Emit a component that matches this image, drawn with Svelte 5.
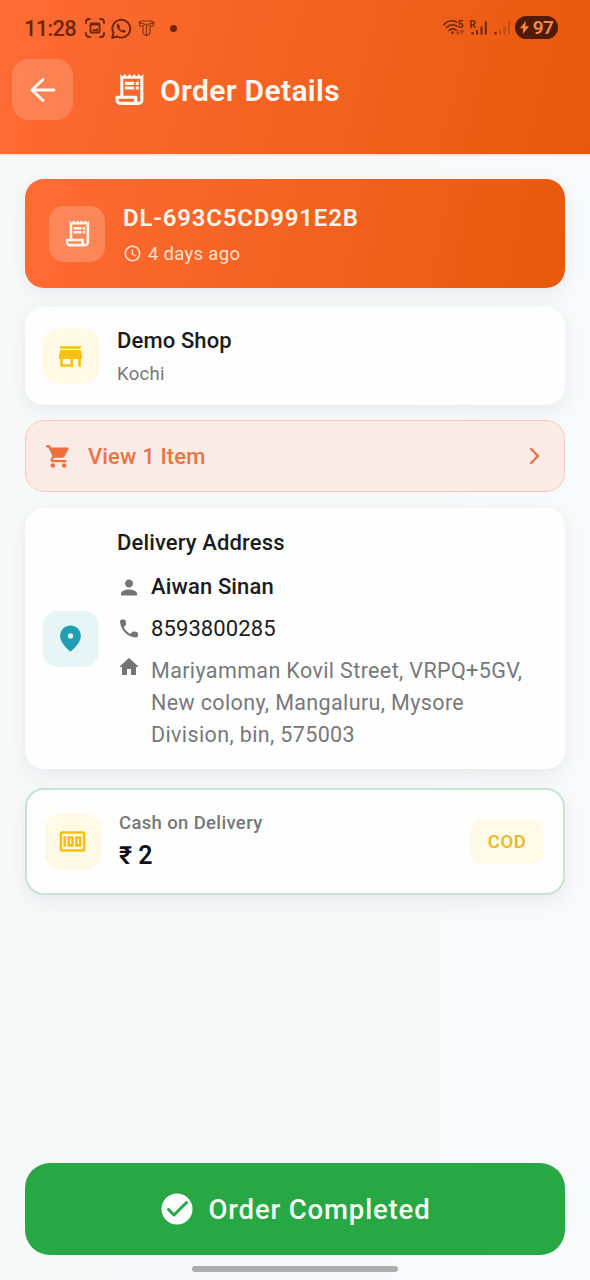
<script>
  const icons = {
    receipt: 'M19.5 3.5 18 2l-1.5 1.5L15 2l-1.5 1.5L12 2l-1.5 1.5L9 2 7.5 3.5 6 2v14H3v3c0 1.66 1.34 3 3 3h12c1.66 0 3-1.34 3-3V2l-1.5 1.5zM15 20H6c-.55 0-1-.45-1-1v-1h10v2zm4-1c0 .55-.45 1-1 1s-1-.45-1-1v-3H8V5h11v14zM9 7h6v2H9zm7 0h2v2h-2zM9 10h6v2H9zm7 0h2v2h-2z',
    store: 'M20 4H4v2h16V4zm1 10v-2l-1-5H4l-1 5v2h1v6h10v-6h4v6h2v-6h1zm-9 4H6v-4h6v4z',
    cart: 'M7 18c-1.1 0-1.99.9-1.99 2S5.9 22 7 22s2-.9 2-2-.9-2-2-2zM1 2v2h2l3.6 7.59-1.35 2.45c-.16.28-.25.61-.25.96 0 1.1.9 2 2 2h12v-2H7.42c-.14 0-.25-.11-.25-.25l.03-.12.9-1.63h7.45c.75 0 1.41-.41 1.75-1.03l3.58-6.49c.08-.14.12-.31.12-.48 0-.55-.45-1-1-1H5.21l-.94-2H1zm16 16c-1.1 0-1.99.9-1.99 2s.89 2 1.99 2 2-.9 2-2-.9-2-2-2z',
    chevron: 'M9.3 6 8.2 7.1 13.1 12l-4.900 4.900 1.100 1.100 6-6z',
    pin: 'M12 2C8 2 4 5 4 10.2c0 3.3 2.6 7.2 7.3 11.5.4.4 1 .4 1.4 0C17.4 17.400 20 13.500 20 10.200 20 5 16 2 12 2zm0 10a2 2 0 1 1 0-4 2 2 0 0 1 0 4z',
    person: 'M12 12c2.210 0 4-1.790 4-4s-1.790-4-4-4-4 1.790-4 4 1.790 4 4 4zm0 2c-2.670 0-8 1.340-8 4v1c0 .55.45 1 1 1h14c.55 0 1-.45 1-1v-1c0-2.660-5.330-4-8-4z',
    phone: 'M19.23 15.26l-2.54-.29c-.61-.07-1.210.14-1.640.57l-1.840 1.840c-2.830-1.440-5.150-3.750-6.590-6.590l1.850-1.850c.43-.43.64-1.030.57-1.640l-.29-2.520c-.12-1.010-.97-1.770-1.990-1.770H5.030c-1.130 0-2.070.94-2 2.070.53 8.540 7.360 15.360 15.890 15.890 1.130.07 2.070-.87 2.070-2v-1.730c.01-1.010-.75-1.860-1.760-1.980z',
    home: 'M10 19v-5h4v5c0 .55.45 1 1 1h3c.55 0 1-.45 1-1v-7h1.700c.46 0 .68-.57.33-.87L12.670 3.600c-.38-.34-.96-.34-1.340 0l-8.360 7.530c-.34.3-.13.87.33.87H5v7c0 .55.45 1 1 1h3c.55 0 1-.45 1-1z',
    money: 'M5 8h2v8H5zM12 8H9c-.55 0-1 .45-1 1v6c0 .55.45 1 1 1h3c.55 0 1-.45 1-1V9c0-.55-.45-1-1-1zm-1 6h-1v-4h1v4zM18 8h-3c-.55 0-1 .45-1 1v6c0 .55.45 1 1 1h3c.55 0 1-.45 1-1V9c0-.55-.45-1-1-1zm-1 6h-1v-4h1v4zM20 4H4c-1.110 0-2 .89-2 2v12c0 1.110.89 2 2 2h16c1.110 0 2-.89 2-2V6c0-1.110-.89-2-2-2zm0 14H4V6h16v12z',
    clock: 'M12 2C6.480 2 2 6.480 2 12s4.480 10 10 10 10-4.480 10-10S17.520 2 12 2zm0 18.100a8.100 8.100 0 1 1 0-16.200 8.100 8.100 0 0 1 0 16.200zM12.700 7H11v6l5.200 3.100.8-1.350-4.300-2.550z'
  };
  const address = ['Mariyamman Kovil Street, VRPQ+5GV,', 'New colony, Mangaluru, Mysore', 'Division, bin, 575003'];
</script>

{#snippet icon(name, size)}
  <svg width={size} height={size} viewBox="0 0 24 24" fill="currentColor" fill-rule="evenodd" aria-hidden="true"><path d={icons[name]} /></svg>
{/snippet}

<div class="screen">
  <header>
    <div class="status">
      <span class="time">11:28</span>
      <svg class="capture" width="20" height="20" viewBox="0 0 20 20" fill="none" stroke="currentColor" stroke-width="1.8" stroke-linecap="round">
        <path d="M1 5V4a3 3 0 0 1 3-3h1M15 1h1a3 3 0 0 1 3 3v1M19 15v1a3 3 0 0 1-3 3h-1M5 19H4a3 3 0 0 1-3-3v-1" />
        <path d="M6.500 5.500h7a1 1 0 0 1 1 1v7a1 1 0 0 1-1 1h-7a1 1 0 0 1-1-1v-7a1 1 0 0 1 1-1zM6 6.500h8" />
        <path d="m7 13 2-2.500 1.500 1.200 1.500-1.700 1.500 3z" fill="currentColor" stroke="none" />
      </svg>
      <svg class="chat" width="21" height="21" viewBox="0 0 21 21" fill="none" stroke="currentColor" stroke-width="1.900">
        <path d="M1.200 19.800 2.500 15A8.900 8.900 0 1 1 6 18.500z" stroke-linejoin="round" />
        <path d="M7.300 5.700c-.5-.3-1.800.5-1.700 1.900.3 3.600 3.600 6.700 6.900 7 1.500 0 2.600-1.100 2.200-1.900l-2.100-1.100-1.400 1c-1.200-.5-2.300-1.500-2.800-2.700l.8-1.200z" fill="currentColor" stroke="none" />
      </svg>
      <svg class="parcel" width="17" height="17" viewBox="0 0 17 17" fill="none" stroke="currentColor" stroke-width="1.100" stroke-linejoin="round">
        <path d="M1 2.500 3.500 1h10L16 2.500l-1 3.700-3-.7V13.500L8.500 15.800 5 13.500V5.500l-3 .7zM1 2.500l4.500 1.300L8.500 5.500l3-1.700L16 2.500M8.500 5.500v10.300" />
      </svg>
      <span class="dot"></span>
      <span class="grow"></span>
      <svg class="signals" width="70" height="20" viewBox="0 0 70 20" fill="none" stroke="currentColor" stroke-width="1.700" stroke-linecap="round">
        <path d="M1 6.500C4.500 2.700 9.500 2 13.500 4M3.500 9.500c3-3 7-3.400 10.500-1.300M6.200 12.300c2.100-1.800 4.600-1.800 6.700-.2" />
        <circle cx="9.500" cy="14.700" r="1.200" fill="currentColor" stroke="none" />
        <path d="M14.700 12v4m-1.500-1.500 1.500 1.500 1.500-1.500M19 16v-4M17.500 13.500 19 12l1.500 1.500" stroke-width="1.200" opacity=".5" />
        <text x="14.800" y="9.500">5</text><text x="26.500" y="9.500">R</text>
        <path d="M29.500 14v2.500M34 12v4.500M38.500 8.500v8M42.800 3.500v13" stroke-width="2" stroke-linecap="butt" />
        <path d="M52.500 14v2.500" stroke-width="2.200" stroke-linecap="butt" />
        <path d="M57 12v4.500M61.500 8.500v8M66 3.500v13" stroke-width="2" stroke-linecap="butt" opacity=".33" />
      </svg>
      <span class="battery">
        <svg width="9" height="13" viewBox="0 0 9 13" fill="currentColor"><path d="M5.700 0 0 7.300h3.300L2.800 13 9 5.300H5.400z" /></svg>97
      </span>
    </div>
    <div class="appbar">
      <div class="back">
        <svg width="26" height="24" viewBox="0 0 26 24" fill="none" stroke="currentColor" stroke-width="2.800" stroke-linecap="round" stroke-linejoin="round"><path d="M24 12H2M13 1.500 2 12l11 10.500" /></svg>
      </div>
      <span class="title-icon">{@render icon('receipt', 37)}</span>
      <h1>Order Details</h1>
    </div>
  </header>

  <main>
    <section class="card order">
      <div class="tile">{@render icon('receipt', 31)}</div>
      <div class="copy">
        <div class="order-id">DL-693C5CD991E2B</div>
        <div class="ago">{@render icon('clock', 19)}<span>4 days ago</span></div>
      </div>
    </section>

    <section class="card shop">
      <div class="tile yellow">{@render icon('store', 31)}</div>
      <div class="copy">
        <div class="strong">Demo Shop</div>
        <div class="place">Kochi</div>
      </div>
    </section>

    <section class="card items">
      {@render icon('cart', 27)}
      <span class="view">View 1 Item</span>
      {@render icon('chevron', 34)}
    </section>

    <section class="card delivery">
      <div class="tile teal">{@render icon('pin', 31)}</div>
      <div class="copy">
        <div class="strong heading">Delivery Address</div>
        <div class="line person">{@render icon('person', 25)}<span class="strong name">Aiwan Sinan</span></div>
        <div class="line phone">{@render icon('phone', 25)}<span>8593800285</span></div>
        <div class="line home">
          {@render icon('home', 24)}
          <div class="address">{#each address as row}<div>{row}</div>{/each}</div>
        </div>
      </div>
    </section>

    <section class="card payment">
      <div class="tile yellow">{@render icon('money', 31)}</div>
      <div class="copy">
        <div class="method">Cash on Delivery</div>
        <div class="amount">₹ 2</div>
      </div>
      <div class="badge">COD</div>
    </section>
  </main>

  <footer>
    <div class="done">
      <svg width="32" height="32" viewBox="0 0 32 32"><circle cx="16" cy="16" r="15.500" fill="#fff" /><path d="m7.500 16.500 5.500 5.500L25.500 9.500" fill="none" stroke="#28a745" stroke-width="3" stroke-linecap="round" stroke-linejoin="round" /></svg>
      <span>Order Completed</span>
    </div>
    <div class="handle"></div>
  </footer>
</div>

<style>
  :global(body) { margin: 0; }
  * { box-sizing: border-box; }
  svg { display: block; flex: none; }
  .screen { width: 590px; height: 1280px; display: flex; flex-direction: column; overflow: hidden; background: linear-gradient(90deg, #f7f9f9 70%, #f8f9fb); font-family: Roboto, sans-serif; color: #1b1c20; white-space: nowrap; }
  header { height: 154px; flex: none; background: linear-gradient(104.600deg, #ff6b35, #e8590c); padding: 14px 0 0 12px; box-shadow: 0 1px 2px #e8590c33; }
  .status { height: 28px; display: flex; align-items: center; padding: 0 32px 0 12px; color: #6b260c; }
  .time { font-size: 22px; font-weight: 500; width: 52px; letter-spacing: -.75px; }
  .capture { margin-left: 9px; }
  .chat { margin-left: 6px; }
  .parcel { margin-left: 6px; opacity: .8; }
  .dot { width: 7px; height: 7px; border-radius: 50%; background: currentColor; margin-left: 15px; }
  .grow { flex: 1; }
  .signals { margin: -1px 0 0; }
  .signals text { font-family: Roboto, sans-serif; font-size: 10px; font-weight: 700; fill: currentColor; stroke: none; }
  .battery { width: 43px; height: 23px; margin: -1px 0 0 2px; border-radius: 12px; background: #521b06; color: #f58a4c; font-size: 19px; font-weight: 600; letter-spacing: -.6px; display: flex; align-items: center; justify-content: center; gap: 4px; }
  .appbar { display: flex; align-items: center; height: 61px; margin-top: 17px; color: #fff8f2; }
  .back { width: 61px; height: 61px; border-radius: 17px; background: #ffffff2b; display: grid; place-items: center; }
  .title-icon { margin-left: 38px; }
  h1 { font-size: 30px; line-height: 36px; font-weight: 600; margin: 3px 0 0 12px; letter-spacing: .35px; }
  main { flex: 1; padding: 25px 25px 0; display: flex; flex-direction: column; }
  .card { border-radius: 19px; background: #fefefe; display: flex; align-items: center; flex: none; box-shadow: 0 6px 18px #1e283212; }
  .tile { width: 56px; height: 56px; border-radius: 15px; display: grid; place-items: center; flex: none; }
  .yellow { background: #fff9e6; color: #f7c114; }
  .teal { background: #e7f5f6; color: #209fb4; }
  .order { height: 109px; padding: 0 24px; background: linear-gradient(101.400deg, #ff6b35, #e8590c); color: #fff5ec; }
  .order .tile { background: #ffffff33; }
  .order .copy { margin: 1px 0 0 18px; }
  .order-id { font-size: 24px; line-height: 32px; font-weight: 600; letter-spacing: .8px; }
  .ago { display: flex; align-items: center; gap: 6px; height: 26px; margin: 7px 0 0; font-size: 18.500px; letter-spacing: .3px; color: #ffe0cf; }
  .shop { height: 98px; margin-top: 19px; padding: 0 18px 0 17.500px; }
  .shop .copy, .delivery .copy { margin-left: 18.500px; }
  .strong { font-size: 22px; line-height: 28px; font-weight: 500; letter-spacing: .13px; }
  .place { font-size: 18.500px; line-height: 24px; margin-top: 7px; letter-spacing: .3px; color: #77787a; }
  .items { height: 72px; margin-top: 15px; padding: 0 12px 0 19px; background: #fbebe7; border: 1.500px solid #f5cabe; box-shadow: none; color: #ef6e3e; }
  .view { flex: 1; margin-left: 16px; font-size: 22px; font-weight: 500; letter-spacing: .15px; color: #e77545; }
  .delivery { height: 261px; margin-top: 16px; padding: 0 18px; }
  .delivery .tile, .payment .tile { margin-left: -.5px; }
  .delivery .copy { align-self: flex-start; padding-top: 21px; }
  .line { display: flex; align-items: center; height: 28px; color: #727376; }
  .line > svg { width: 24px; margin-right: 10px; }
  .person { margin-top: 16px; }
  .name { color: #1b1c20; }
  .phone { margin-top: 13px; font-size: 22px; letter-spacing: .1px; }
  .phone span { color: #1b1c20; }
  .home { height: auto; align-items: flex-start; margin-top: 13px; }
  .address { font-size: 21.500px; line-height: 32px; letter-spacing: .37px; color: #77787b; }
  .payment { height: 107px; margin-top: 19px; padding: 0 19px 0 18px; border: 2px solid #c5e4d1; }
  .payment .copy { flex: 1; margin: -2px 0 0 18.500px; }
  .method { font-size: 18.500px; line-height: 24px; font-weight: 500; letter-spacing: .35px; color: #77787a; }
  .amount { font-size: 25px; line-height: 30px; font-weight: 600; margin-top: 6px; color: #111216; }
  .badge { width: 74px; height: 44px; border-radius: 12px; display: grid; place-items: center; background: #fffae8; color: #e9bb2b; font-size: 18.500px; font-weight: 600; letter-spacing: .5px; }
  footer { height: 117px; flex: none; padding: 0 25px; background: linear-gradient(90deg, #f5f9f8, #f7f9fa); }
  .done { height: 92px; border-radius: 25px; background: #28a745; color: #f3fff2; display: flex; align-items: center; justify-content: center; gap: 15px; font-size: 27.500px; font-weight: 500; letter-spacing: .85px; padding-left: 2px; }
  .done span { margin-top: 1px; }
  .handle { width: 206px; height: 6px; border-radius: 3px; margin: 11px auto 0; background: #a9adad; }
</style>
